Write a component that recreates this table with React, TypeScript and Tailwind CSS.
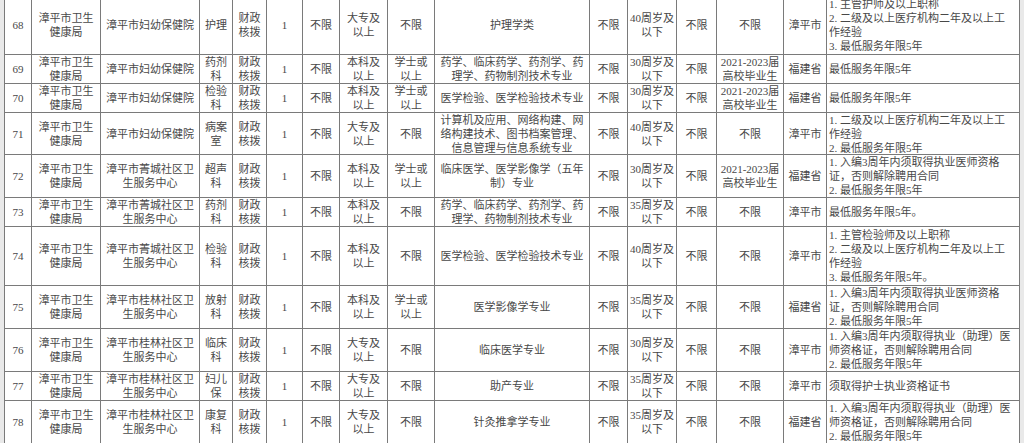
import React from "react";

type Row = {
  n: string;
  c3: string[];
  c4: string[];
  c8: string[];
  c9: string[];
  c10: string[];
  c12: string[];
  c14: string[];
  c15: string;
  rem: string[];
};

const L = (s: string) => s.split("|");

const rows: Row[] = [
  { n: "68", c3: ["漳平市妇幼保健院"], c4: ["护理"], c8: L("大专及|以上"), c9: ["不限"], c10: ["护理学类"], c12: L("40周岁及|以下"), c14: ["不限"], c15: "漳平市", rem: L("1. 主管护师及以上职称|2. 二级及以上医疗机构二年及以上工|作经验|3. 最低服务年限5年") },
  { n: "69", c3: ["漳平市妇幼保健院"], c4: L("药剂|科"), c8: L("本科及|以上"), c9: L("学士或|以上"), c10: L("药学、临床药学、药剂学、药|理学、药物制剂技术专业"), c12: L("30周岁及|以下"), c14: L("2021-2023届|高校毕业生"), c15: "福建省", rem: ["最低服务年限5年"] },
  { n: "70", c3: ["漳平市妇幼保健院"], c4: L("检验|科"), c8: L("本科及|以上"), c9: L("学士或|以上"), c10: ["医学检验、医学检验技术专业"], c12: L("30周岁及|以下"), c14: L("2021-2023届|高校毕业生"), c15: "福建省", rem: ["最低服务年限5年"] },
  { n: "71", c3: ["漳平市妇幼保健院"], c4: L("病案|室"), c8: L("大专及|以上"), c9: ["不限"], c10: L("计算机及应用、网络构建、网|络构建技术、图书档案管理、|信息管理与信息系统专业"), c12: L("40周岁及|以下"), c14: ["不限"], c15: "漳平市", rem: L("1. 二级及以上医疗机构二年及以上工|作经验|2. 最低服务年限5年") },
  { n: "72", c3: L("漳平市菁城社区卫|生服务中心"), c4: L("超声|科"), c8: L("本科及|以上"), c9: L("学士或|以上"), c10: L("临床医学、医学影像学（五年|制）专业"), c12: L("30周岁及|以下"), c14: L("2021-2023届|高校毕业生"), c15: "福建省", rem: L("1. 入编3周年内须取得执业医师资格|证，否则解除聘用合同|2. 最低服务年限5年") },
  { n: "73", c3: L("漳平市菁城社区卫|生服务中心"), c4: L("药剂|科"), c8: L("本科及|以上"), c9: ["不限"], c10: L("药学、临床药学、药剂学、药|理学、药物制剂技术专业"), c12: L("35周岁及|以下"), c14: ["不限"], c15: "漳平市", rem: ["最低服务年限5年。"] },
  { n: "74", c3: L("漳平市菁城社区卫|生服务中心"), c4: L("检验|科"), c8: L("本科及|以上"), c9: ["不限"], c10: ["医学检验、医学检验技术专业"], c12: L("40周岁及|以下"), c14: ["不限"], c15: "漳平市", rem: L("1. 主管检验师及以上职称|2. 二级及以上医疗机构二年及以上工|作经验|3. 最低服务年限5年。") },
  { n: "75", c3: L("漳平市桂林社区卫|生服务中心"), c4: L("放射|科"), c8: L("本科及|以上"), c9: L("学士或|以上"), c10: ["医学影像学专业"], c12: L("35周岁及|以下"), c14: ["不限"], c15: "福建省", rem: L("1. 入编3周年内须取得执业医师资格|证，否则解除聘用合同|2. 最低服务年限5年") },
  { n: "76", c3: L("漳平市桂林社区卫|生服务中心"), c4: L("临床|科"), c8: L("大专及|以上"), c9: ["不限"], c10: ["临床医学专业"], c12: L("30周岁及|以下"), c14: ["不限"], c15: "漳平市", rem: L("1. 入编3周年内须取得执业（助理）医|师资格证，否则解除聘用合同|2. 最低服务年限5年") },
  { n: "77", c3: L("漳平市桂林社区卫|生服务中心"), c4: L("妇儿|保"), c8: L("大专及|以上"), c9: ["不限"], c10: ["助产专业"], c12: L("35周岁及|以下"), c14: ["不限"], c15: "漳平市", rem: ["须取得护士执业资格证书"] },
  { n: "78", c3: L("漳平市桂林社区卫|生服务中心"), c4: L("康复|科"), c8: L("大专及|以上"), c9: ["不限"], c10: ["针灸推拿学专业"], c12: L("35周岁及|以下"), c14: ["不限"], c15: "福建省", rem: L("1. 入编3周年内须取得执业（助理）医|师资格证，否则解除聘用合同|2. 最低服务年限5年") },
];

function C({ lines }: { lines: string[] }) {
  return (
    <div className="bg-white flex flex-col items-center justify-center text-center overflow-hidden">
      {lines.map((l, i) => (
        <div key={i} className="whitespace-nowrap">
          {l}
        </div>
      ))}
    </div>
  );
}

function R({ lines }: { lines: string[] }) {
  return (
    <div className="bg-white flex flex-col items-start justify-center text-left pl-[2px] overflow-hidden">
      {lines.map((l, i) => (
        <div key={i} className="whitespace-nowrap">
          {l}
        </div>
      ))}
    </div>
  );
}

export default function App() {
  return (
    <div
      className="w-[1024px] h-[443px] overflow-hidden bg-[#e9e9e9] pl-[4px]"
      style={{ fontFamily: '"Liberation Serif", "Noto Sans CJK SC", serif' }}
    >
      <div className="-mt-[5px] w-[1016px] grid grid-cols-[26px_68px_98px_32px_33px_35px_36px_47px_46px_154px_37px_48px_39px_66px_42px_192px] grid-rows-[58px_28px_28px_41px_42px_28px_58px_42px_42px_28px_42px] gap-px p-px bg-[#7a7a7a] text-[11px] leading-[14px] text-[#484848]">
        {rows.map((r) => (
          <React.Fragment key={r.n}>
            <C lines={[r.n]} />
            <C lines={["漳平市卫生", "健康局"]} />
            <C lines={r.c3} />
            <C lines={r.c4} />
            <C lines={["财政", "核拨"]} />
            <C lines={["1"]} />
            <C lines={["不限"]} />
            <C lines={r.c8} />
            <C lines={r.c9} />
            <C lines={r.c10} />
            <C lines={["不限"]} />
            <C lines={r.c12} />
            <C lines={["不限"]} />
            <C lines={r.c14} />
            <C lines={[r.c15]} />
            <R lines={r.rem} />
          </React.Fragment>
        ))}
      </div>
    </div>
  );
}
